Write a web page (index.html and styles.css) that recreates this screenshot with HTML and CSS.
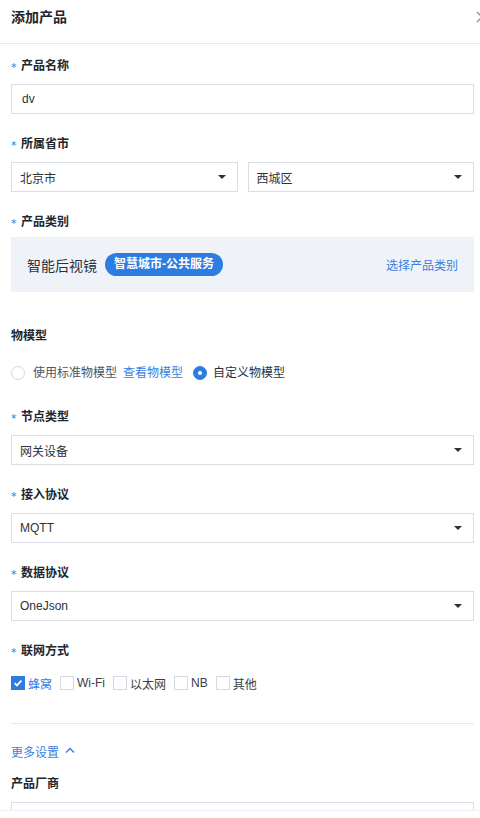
FILE: index.html
```html
<!DOCTYPE html>
<html lang="zh-CN">
<head>
<meta charset="utf-8">
<title>添加产品</title>
<link rel="stylesheet" href="styles.css">
</head>
<body>
<div class="drawer">
  <div class="drawer-header">
    <span class="drawer-title">添加产品</span>
    <svg class="close" width="12" height="12" viewBox="0 0 12 12"><path d="M1 1 L11 11 M11 1 L1 11" stroke="#8a8f99" stroke-width="1.4" fill="none"/></svg>
  </div>
  <div class="drawer-body">
    <div class="label req first"><i>*</i>产品名称</div>
    <div class="control input"><span>dv</span></div>

    <div class="label req"><i>*</i>所属省市</div>
    <div class="row2">
      <div class="control select"><span>北京市</span><b class="caret"></b></div>
      <div class="control select"><span>西城区</span><b class="caret"></b></div>
    </div>

    <div class="label req"><i>*</i>产品类别</div>
    <div class="category">
      <span class="cat-name">智能后视镜</span>
      <span class="pill">智慧城市-公共服务</span>
      <span class="link cat-link">选择产品类别</span>
    </div>

    <div class="label model-label">物模型</div>
    <div class="radios">
      <span class="radio"></span><span class="opt">使用标准物模型</span>
      <span class="link view">查看物模型</span>
      <span class="radio on"></span><span class="opt">自定义物模型</span>
    </div>

    <div class="label req node-label"><i>*</i>节点类型</div>
    <div class="control select"><span>网关设备</span><b class="caret"></b></div>

    <div class="label req"><i>*</i>接入协议</div>
    <div class="control select"><span>MQTT</span><b class="caret"></b></div>

    <div class="label req"><i>*</i>数据协议</div>
    <div class="control select"><span>OneJson</span><b class="caret"></b></div>

    <div class="label req"><i>*</i>联网方式</div>
    <div class="checks">
      <span class="cb on"><svg width="10" height="10" viewBox="0 0 10 10"><path d="M1.6 5.2 L4 7.4 L8.4 2.6" stroke="#fff" stroke-width="1.8" fill="none"/></svg></span><span class="ck active">蜂窝</span>
      <span class="cb"></span><span class="ck">Wi-Fi</span>
      <span class="cb"></span><span class="ck">以太网</span>
      <span class="cb"></span><span class="ck">NB</span>
      <span class="cb"></span><span class="ck">其他</span>
    </div>

    <div class="divider"></div>

    <div class="more">更多设置<svg width="10" height="7" viewBox="0 0 10 7"><path d="M1 5.5 L5 1.5 L9 5.5" stroke="#3a80e0" stroke-width="1.5" fill="none"/></svg></div>

    <div class="label vendor-label">产品厂商</div>
    <div class="control input"></div>
  </div>
  <div class="drawer-footer"></div>
</div>
</body>
</html>
```

FILE: styles.css
```css
* { box-sizing: border-box; }
html, body { margin: 0; padding: 0; background: #fff; }
body {
  font-family: "Liberation Sans", "Noto Sans CJK SC", sans-serif;
  color: #1f2329;
  font-size: 12px;
}
.drawer {
  width: 480px;
  height: 818px;
  overflow: hidden;
  display: flex;
  flex-direction: column;
}
.drawer-header {
  height: 44px;
  flex: none;
  display: flex;
  align-items: center;
  justify-content: space-between;
  padding: 0 0 1px 11px;
  border-bottom: 1px solid #e6e9ef;
}
.drawer-title {
  font-size: 14px;
  font-weight: 700;
  color: #22262d;
  line-height: 20px;
  margin-top: -8px;
}
.close { margin-right: -8px; margin-top: -8px; flex: none; }
.drawer-body {
  flex: 1;
  min-height: 0;
  overflow: hidden;
  padding: 0 6px 0 11px;
  display: flex;
  flex-direction: column;
}
.drawer-body > * { flex: none; }
.drawer-footer {
  height: 8px;
  flex: none;
  border-top: 1px solid #edf0f4;
}
.label {
  height: 20px;
  line-height: 20px;
  font-size: 12px;
  font-weight: 700;
  color: #22262d;
  margin-top: 20px;
  margin-bottom: 8px;
  display: flex;
  align-items: center;
}
.label.first { margin-top: 12px; }
.label i {
  font-style: normal;
  font-weight: 400;
  font-family: "DejaVu Sans", sans-serif;
  color: #2b7be3;
  width: 10px;
  font-size: 11px;
  line-height: 20px;
  margin-top: 3px;
}
.control {
  height: 30px;
  border: 1px solid #d9dee6;
  display: flex;
  align-items: center;
  padding: 0 11px 0 8px;
  font-size: 12px;
  color: #2d3139;
}
.input span { padding-left: 2px; }
.select { justify-content: space-between; }
.caret {
  width: 0;
  height: 0;
  border-left: 4px solid transparent;
  border-right: 4px solid transparent;
  border-top: 4px solid #2d3139;
}
.row2 {
  display: grid;
  grid-template-columns: 1fr 1fr;
  column-gap: 10px;
}
.label + .category { margin-top: -3px; }
.category {
  height: 55px;
  background: #eff3f8;
  display: flex;
  align-items: center;
  padding: 0 16px 0 16px;
}
.cat-name { font-size: 14px; color: #2d3139; }
.pill {
  margin-left: 8px;
  background: #2d7ce2;
  color: #fff;
  font-weight: 700;
  font-size: 12px;
  height: 23px;
  line-height: 23px;
  border-radius: 12px;
  padding: 0 9px;
}
.link { color: #3a80e0; }
.cat-link { margin-left: auto; font-size: 12px; }
.label.model-label { margin-top: 34px; margin-bottom: 15px; }
.radios {
  height: 20px;
  display: flex;
  align-items: center;
  font-size: 12px;
}
.radio {
  width: 14px;
  height: 14px;
  border-radius: 50%;
  border: 1px solid #d5dae2;
  flex: none;
  margin-top: 3px;
  position: relative;
}
.radio.on { background: #2d7ce2; border-color: #2d7ce2; }
.radio.on::after {
  content: "";
  position: absolute;
  left: 4px; top: 4px;
  width: 4px; height: 4px;
  border-radius: 50%;
  background: #fff;
}
.opt { margin-left: 8px; color: #3a3e46; }
.radios .opt:nth-child(2) { color: #50555e; }
.view { margin-left: 6px; margin-right: 10px; }
.radios .radio.on + .opt { margin-left: 6px; color: #2d3139; }
.label.node-label { margin-top: 26px; }
.checks {
  height: 20px;
  margin-top: 4px;
  display: flex;
  align-items: center;
  font-size: 12px;
}
.cb {
  width: 14px;
  height: 14px;
  border: 1px solid #d5dae2;
  flex: none;
  display: flex;
  align-items: center;
  justify-content: center;
}
.cb.on { background: #2d7ce2; border-color: #2d7ce2; }
.ck { margin-left: 3px; margin-right: 8px; color: #3a3e46; }
.ck.active { color: #3a80e0; }
.divider {
  height: 1px;
  background: #e6e9ef;
  margin-top: 30px;
}
.more {
  margin-top: 17px;
  height: 20px;
  display: flex;
  align-items: center;
  color: #3a80e0;
  font-size: 12px;
}
.more svg { margin-left: 6px; margin-top: -2px; }
.label.vendor-label { margin-top: 13px; }
```
